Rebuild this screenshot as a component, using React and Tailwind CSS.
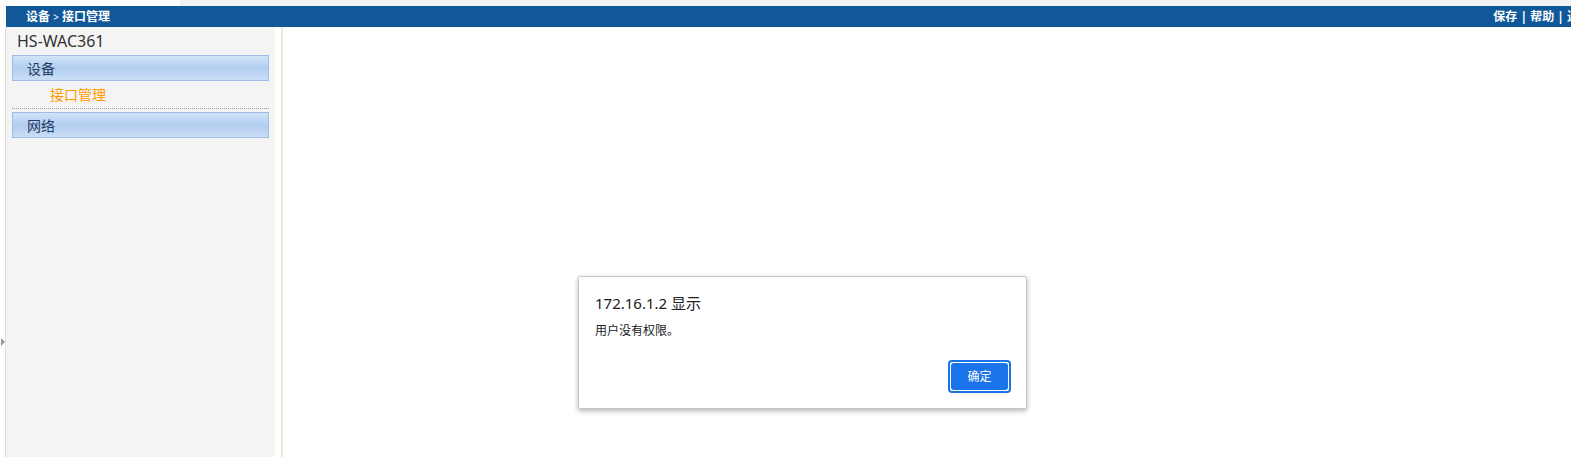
import React from "react";

const font = { fontFamily: '"Noto Sans", "Noto Sans CJK SC", sans-serif' };

function MenuGroup({ label }) {
  return (
    <div className="mx-[6px] flex h-[26px] items-center border border-[#9dbde8] bg-gradient-to-b from-[#d2e4f8] via-[#b1cdf0] to-[#c9def6] pl-[14px] text-[14px] text-[#1f3b63]">
      {label}
    </div>
  );
}

export default function App() {
  return (
    <div className="flex h-[457px] w-full flex-col overflow-hidden bg-white" style={font}>
      <div className="flex h-[6px]">
        <div className="w-[180px] bg-white" />
        <div className="flex-1 bg-[#f2f2f2]" />
      </div>
      <div className="ml-[6px] flex h-[21px] items-center justify-between bg-[#105898] text-[12px] font-bold text-white">
        <span className="pl-[20px]">
          设备 <span className="text-[10px] font-normal">&gt;</span> 接口管理
        </span>
        <span className="-mr-[8px] whitespace-nowrap">保存 | 帮助 | 退</span>
      </div>

      <div className="relative flex flex-1">
        <div className="w-[5px] pt-[311px]">
          <span className="ml-[1px] block h-0 w-0 border-y-[4px] border-l-[4px] border-y-transparent border-l-[#999]" />
        </div>
        <aside className="flex w-[270px] flex-col border-l border-[#dcdcdc] bg-[#f4f4f4]">
          <div className="pl-[11px] pt-[3px] text-[16px] leading-[22px] text-[#333]">HS-WAC361</div>
          <div className="mt-[3px]">
            <MenuGroup label="设备" />
          </div>
          <div className="pl-[44px] pt-[4px] text-[14px] leading-[20px] text-[#ff9900]">接口管理</div>
          <div className="mx-[6px] mt-[3px] border-t border-dotted border-[#999]" />
          <div className="mt-[3px]">
            <MenuGroup label="网络" />
          </div>
        </aside>
        <div className="w-[6px] bg-white" />
        <div className="w-[2px] bg-[#ece9d8]" />
        <main className="relative flex-1 bg-white">
          <div className="absolute left-[295px] top-[249px] h-[133px] w-[449px] rounded-[2px] border border-[#c8c8c8] bg-white shadow-[0_2px_5px_rgba(0,0,0,0.3)]">
            <div className="pl-[16px] pt-[15px] text-[15px] leading-[22px] text-[#202124]">172.16.1.2 显示</div>
            <div className="pl-[16px] pt-[9px] text-[12px] leading-[16px] text-[#202124]">用户没有权限。</div>
            <div className="absolute bottom-[15px] right-[15px] rounded-[4px] border-[2px] border-[#1a73e8] bg-white p-[1px]">
              <button
                type="button"
                className="flex h-[27px] w-[57px] items-center justify-center rounded-[3px] bg-[#1a73e8] text-[12px] text-white"
              >
                确定
              </button>
            </div>
          </div>
        </main>
      </div>
    </div>
  );
}
